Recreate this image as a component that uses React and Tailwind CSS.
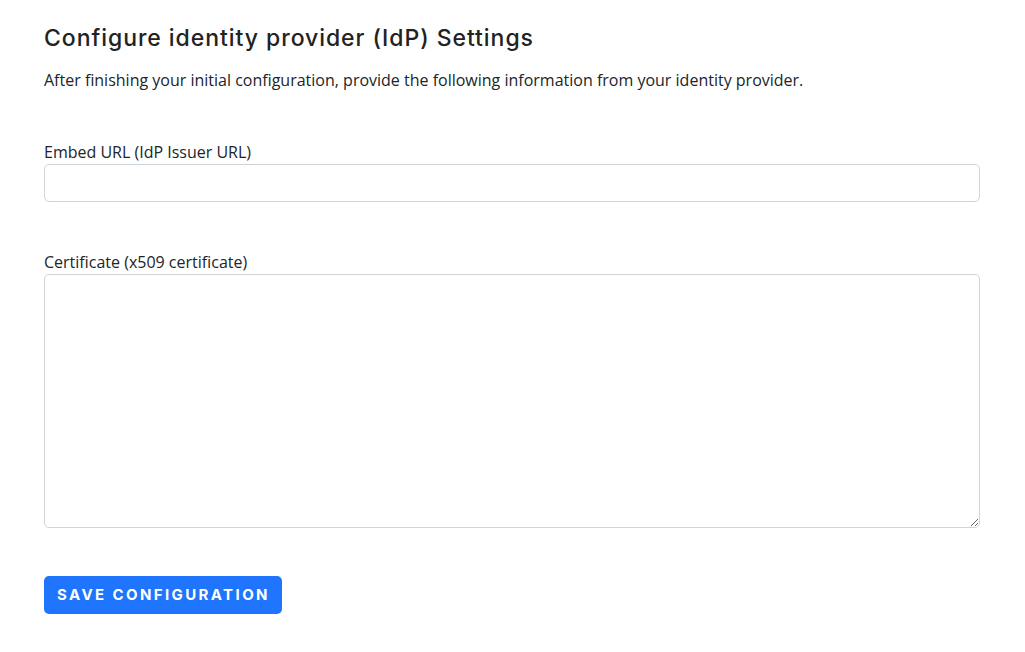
export default function App() {
  return (
    <div className="min-h-screen bg-white px-[44px] pt-[24px] text-[#212529]" style={{ fontFamily: '"Open Sans", sans-serif' }}>
      <h2
        className="text-[23px] font-medium leading-[28px] tracking-[0.95px] text-[#222]"
        style={{ fontFamily: "Inter, sans-serif" }}
      >
        Configure identity provider (IdP) Settings
      </h2>
      <p className="mt-[16px] text-[16px] leading-[24px]">
        After finishing your initial configuration, provide the following information from your identity provider.
      </p>

      <div className="mt-[48px] w-[936px]">
        <label className="block text-[16px] leading-[24px]">Embed URL (IdP Issuer URL)</label>
        <input
          type="text"
          className="block h-[38px] w-full rounded-[5px] border border-[#ced4da] px-3 outline-none"
        />
      </div>

      <div className="mt-[48px] w-[936px]">
        <label className="block text-[16px] leading-[24px]">Certificate (x509 certificate)</label>
        <textarea className="block h-[254px] w-full rounded-[5px] border border-[#ced4da] px-3 py-2 outline-none" />
      </div>

      <button
        className="mt-[48px] h-[38px] rounded-[5px] bg-[#1f75fe] pl-[13px] pr-[12px] text-[15px] font-bold uppercase tracking-[2.4px] text-white"
        style={{ fontFamily: "Inter, sans-serif" }}
      >
        Save Configuration
      </button>
    </div>
  );
}
